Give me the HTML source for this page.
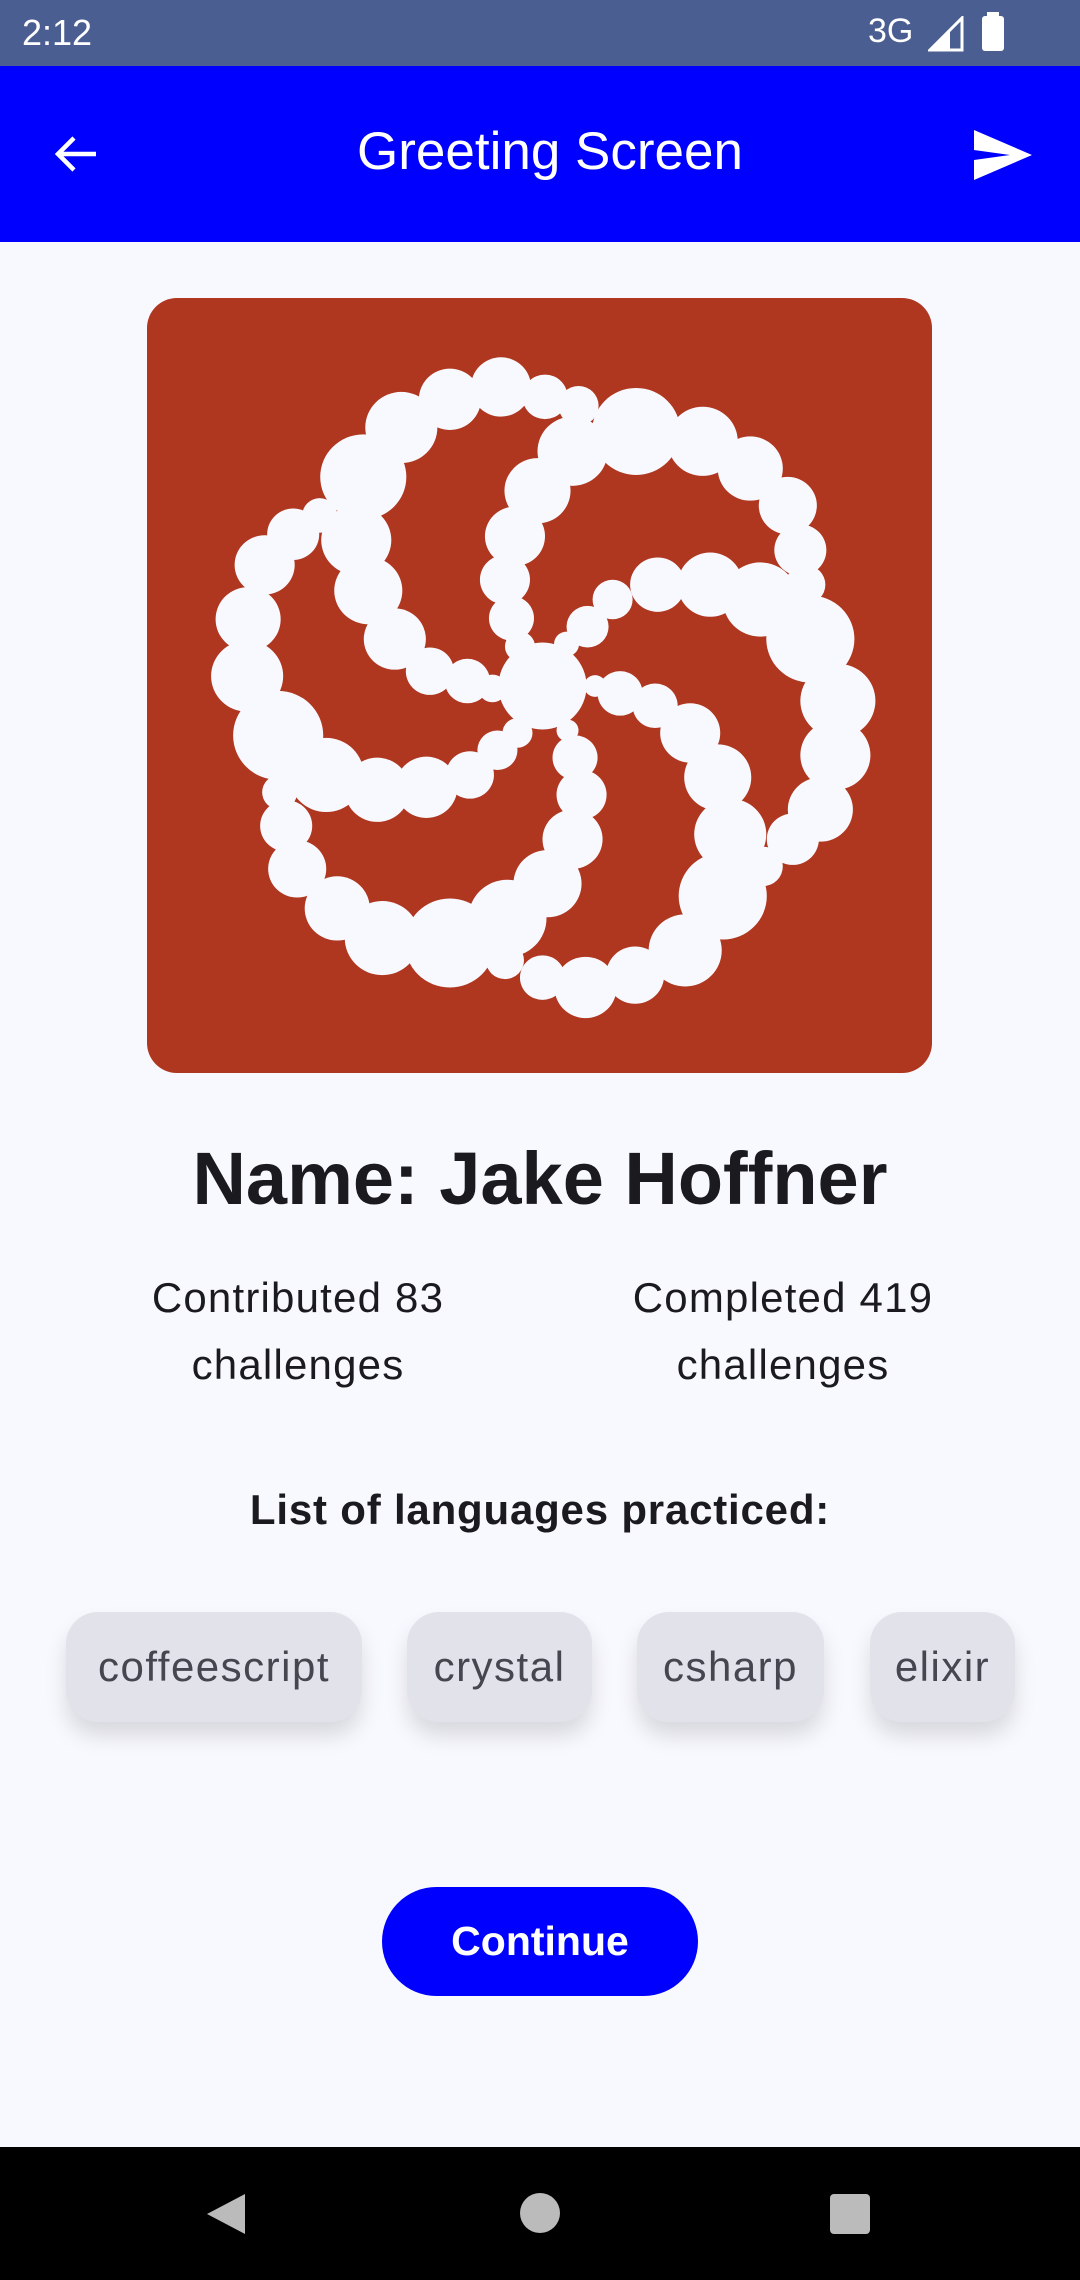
<!DOCTYPE html>
<html><head><meta charset="utf-8"><style>
*{margin:0;padding:0;box-sizing:border-box}
body{width:1080px;height:2280px;background:#f8f9fe;font-family:"Liberation Sans",sans-serif;position:relative;overflow:hidden;color:#1b1b1f}
.abs{position:absolute}
.sb{top:0;left:0;width:1080px;height:66px;background:#4b5e92;color:#fff}
.ab{top:66px;left:0;width:1080px;height:176px;background:#0000ff;color:#fff}
.c{text-align:center}
.chip{position:absolute;top:1612px;height:110px;background:#e2e2ea;border-radius:32px;box-shadow:0 14px 22px rgba(0,0,0,0.13);font-size:42px;color:#45464f;line-height:110px;text-align:center;letter-spacing:1.5px}
</style></head><body>
<div class="abs sb"><div class="abs" style="left:22px;top:12px;font-size:36px">2:12</div>
<div class="abs" style="left:868px;top:12px;font-size:34px">3G</div>
<svg class="abs" style="left:928px;top:16px" width="36" height="36" viewBox="0 0 36 36"><path d="M34 2V34H2Z" fill="none" stroke="#fff" stroke-width="3"/><path d="M22 14V34H2Z" fill="#fff"/></svg>
<div class="abs" style="left:982px;top:16px;width:22px;height:35px;background:#fff;border-radius:3px"></div>
<div class="abs" style="left:987px;top:12px;width:12px;height:6px;background:#fff"></div>
</div>
<div class="abs ab">
<svg class="abs" style="left:52px;top:64px" width="48" height="48" viewBox="0 0 48 48"><path d="M44 24H8M22 8L6 24L22 40" fill="none" stroke="#fff" stroke-width="4.5"/></svg>
<div class="abs c" style="left:0;width:1100px;top:55px;font-size:53px">Greeting Screen</div>
<svg class="abs" style="left:972px;top:62px" width="62" height="54" viewBox="0 0 62 54"><path d="M2 2L60 27L2 52L2 32L38 27L2 22Z" fill="#fff"/></svg>
</div>
<div class="abs" style="left:147px;top:298px;width:785px;height:775px;background:#af361f;border-radius:30px;overflow:hidden">
<svg width="785" height="775" viewBox="0 0 1568 1568" preserveAspectRatio="none"><g fill="#f8f9fe">
<circle cx="605" cy="205" r="62"/><circle cx="707" cy="180" r="60"/><circle cx="795" cy="200" r="45"/><circle cx="862" cy="218" r="40"/><circle cx="508" cy="262" r="72"/><circle cx="432" cy="362" r="86"/><circle cx="418" cy="490" r="70"/><circle cx="442" cy="592" r="68"/><circle cx="495" cy="690" r="62"/><circle cx="565" cy="755" r="48"/><circle cx="640" cy="775" r="45"/><circle cx="690" cy="790" r="28"/>
<circle cx="977" cy="270" r="88"/><circle cx="1110" cy="290" r="70"/><circle cx="1205" cy="345" r="65"/><circle cx="1280" cy="420" r="58"/><circle cx="1305" cy="510" r="52"/><circle cx="1315" cy="580" r="40"/><circle cx="850" cy="310" r="70"/><circle cx="780" cy="390" r="66"/><circle cx="735" cy="482" r="60"/><circle cx="715" cy="570" r="50"/><circle cx="728" cy="648" r="45"/><circle cx="745" cy="705" r="30"/><circle cx="1325" cy="690" r="88"/>
<circle cx="1020" cy="580" r="55"/><circle cx="1125" cy="580" r="65"/><circle cx="1225" cy="610" r="75"/><circle cx="880" cy="665" r="42"/><circle cx="930" cy="610" r="40"/><circle cx="838" cy="700" r="25"/><circle cx="1380" cy="815" r="75"/><circle cx="1375" cy="925" r="70"/><circle cx="1345" cy="1035" r="65"/><circle cx="1290" cy="1095" r="52"/><circle cx="1230" cy="1150" r="40"/>
<circle cx="945" cy="800" r="45"/><circle cx="1015" cy="825" r="45"/><circle cx="1085" cy="880" r="60"/><circle cx="1140" cy="970" r="67"/><circle cx="1165" cy="1085" r="72"/><circle cx="1150" cy="1210" r="88"/><circle cx="1075" cy="1320" r="73"/><circle cx="975" cy="1370" r="58"/><circle cx="876" cy="1395" r="62"/><circle cx="790" cy="1375" r="45"/><circle cx="895" cy="785" r="22"/>
<circle cx="855" cy="930" r="45"/><circle cx="868" cy="1005" r="50"/><circle cx="850" cy="1095" r="60"/><circle cx="800" cy="1185" r="68"/><circle cx="720" cy="1255" r="78"/><circle cx="605" cy="1305" r="90"/><circle cx="470" cy="1295" r="75"/><circle cx="380" cy="1235" r="65"/><circle cx="300" cy="1155" r="58"/><circle cx="278" cy="1068" r="52"/><circle cx="265" cy="1000" r="35"/><circle cx="715" cy="1340" r="38"/><circle cx="840" cy="875" r="22"/>
<circle cx="262" cy="885" r="90"/><circle cx="200" cy="765" r="72"/><circle cx="202" cy="650" r="65"/><circle cx="235" cy="540" r="60"/><circle cx="292" cy="478" r="52"/><circle cx="345" cy="440" r="35"/><circle cx="358" cy="965" r="75"/><circle cx="460" cy="995" r="65"/><circle cx="558" cy="990" r="62"/><circle cx="645" cy="965" r="48"/><circle cx="700" cy="915" r="40"/><circle cx="740" cy="880" r="30"/>
<circle cx="790" cy="785" r="88"/></g></svg>
</div>
<div class="abs c" style="left:0;width:1080px;top:1136px;font-size:74px;font-weight:bold">Name: Jake Hoffner</div>
<div class="abs c" style="left:48px;width:500px;top:1264px;font-size:42px;line-height:67px;letter-spacing:1.2px">Contributed 83<br>challenges</div>
<div class="abs c" style="left:533px;width:500px;top:1264px;font-size:42px;line-height:67px;letter-spacing:1.2px">Completed 419<br>challenges</div>
<div class="abs c" style="left:0;width:1080px;top:1486px;font-size:42px;font-weight:bold;letter-spacing:0.8px">List of languages practiced:</div>
<div class="chip" style="left:66px;width:296px">coffeescript</div>
<div class="chip" style="left:407px;width:185px">crystal</div>
<div class="chip" style="left:637px;width:187px">csharp</div>
<div class="chip" style="left:870px;width:145px">elixir</div>
<div class="abs c" style="left:382px;top:1887px;width:316px;height:109px;border-radius:55px;background:#0000ff;color:#fff;font-size:41px;font-weight:bold;line-height:109px">Continue</div>
<div class="abs" style="left:0;top:2147px;width:1080px;height:133px;background:#000">
<svg class="abs" style="left:205px;top:45px" width="42" height="44" viewBox="0 0 42 44"><path d="M40 2V42L2 22Z" fill="#bbb"/></svg>
<div class="abs" style="left:520px;top:46px;width:40px;height:40px;border-radius:50%;background:#bbb"></div>
<div class="abs" style="left:830px;top:47px;width:40px;height:40px;border-radius:4px;background:#bbb"></div>
</div>
</body></html>
